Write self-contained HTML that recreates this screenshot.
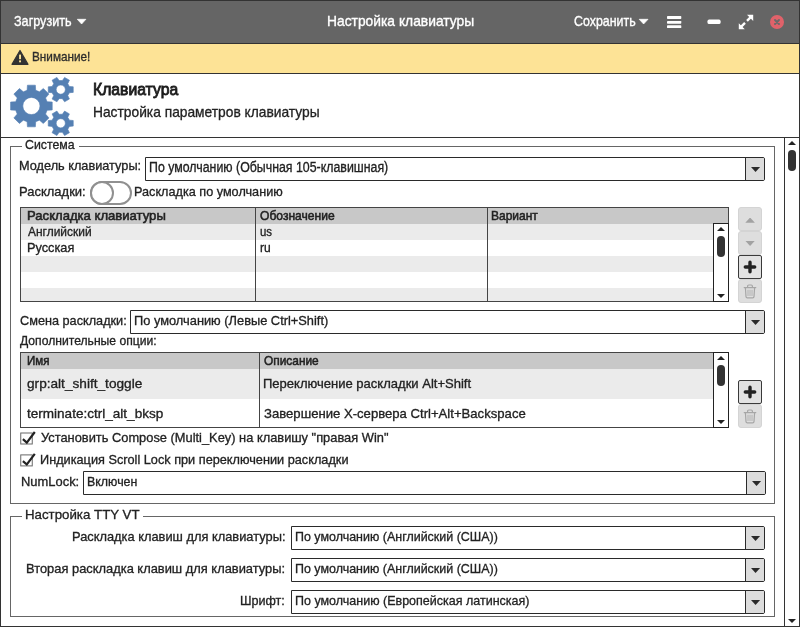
<!DOCTYPE html>
<html lang="ru">
<head>
<meta charset="utf-8">
<title>Настройка клавиатуры</title>
<style>
*{box-sizing:border-box;margin:0;padding:0}
html,body{width:800px;height:627px;overflow:hidden;background:#fff}
body{font-family:"Liberation Sans",sans-serif;font-size:13px;color:#222;position:relative}
.abs,.abs>*{position:absolute}
.t{position:absolute;white-space:nowrap;line-height:20px;height:20px;color:#222;transform-origin:0 50%;-webkit-text-stroke:.32px #222}
#win{left:0;top:0;width:800px;height:627px;position:absolute;overflow:hidden}
.ln{position:absolute;background:#333}
#title{left:0;top:0;width:800px;height:43px;background:#656565}
#warn{left:0;top:43px;width:800px;height:31px;background:#fde396;border-top:1px solid #333;border-bottom:1px solid #333}
#hdr{left:0;top:74px;width:800px;height:64px;background:#fff;border-bottom:1px solid #333}
.fs{position:absolute;border:1px solid #666}
.lg{position:absolute;background:#fff;height:14px}
.sel{position:absolute;height:24px;border:1px solid #2a2a2a;background:#fff;border-radius:0 2px 2px 0}
.sel .b{position:absolute;right:0;top:0;width:19px;height:22px;background:#dcdcdc;border-left:1px solid #2a2a2a;border-radius:0 1px 1px 0}
.sel .b:after{content:"";position:absolute;left:4.800px;top:8.800px;width:9.500px;height:5.200px;background:#2a2a2a;clip-path:polygon(0 0,100% 0,50% 100%)}
.tbl{position:absolute;border:1px solid #444;background:#fff;overflow:hidden}
.tbl .r{position:absolute;left:0;width:100%}
.tbl .v{position:absolute;top:0;bottom:0;width:1px;background:#444}
.sb{position:absolute;background:#fff;border:1px solid #222}
.thumb{position:absolute;background:#333;border-radius:4px;width:8px}
.up,.dn{position:absolute;width:0;height:0;border:4px solid transparent}
.up{border-bottom:4px solid #222;border-top:0}
.dn{border-top:4px solid #222;border-bottom:0}
.btn{position:absolute;width:24px;height:24px;border-radius:3px;background:#dedede;border:1px solid #d4d4d4}
.btn.en{border-color:#3a3a3a;background:#e2e2e2;border-radius:2px}
</style>
</head>
<body>
<div id="win">
<div id="title" class="abs">
</div>
<div id="warn" class="abs">
</div>
<div id="hdr" class="abs">
</div>

<!-- scroll area -->
<div class="ln" style="left:784px;top:138px;width:1px;height:488px"></div>
<div class="up" style="left:788px;top:141px"></div>
<div class="thumb" style="left:788px;top:150px;height:21px"></div>
<div class="dn" style="left:788px;top:619px"></div>

<!-- fieldset 1 -->
<div class="fs" style="left:10px;top:146px;width:765px;height:358px"></div>
<div class="lg" style="left:22px;top:139px;width:57px"></div>
<div class="sel" style="left:145px;top:157px;width:620px"><div class="b"></div></div>
<div id="tog" style="position:absolute;left:90px;top:181px;width:42px;height:24px;border:2px solid #909090;border-radius:12px;background:#fff"></div>
<div id="knob" style="position:absolute;left:90px;top:181px;width:24px;height:24px;border:2px solid #909090;border-radius:12px;background:#fff"></div>

<!-- table 1 -->
<div class="tbl" style="left:20px;top:207px;width:709px;height:95px">
  <div class="r" style="top:0;height:16px;background:#c8c8c8"></div>
  <div class="r" style="top:16px;height:16px;background:#ebebeb"></div>
  <div class="r" style="top:48px;height:16px;background:#ebebeb"></div>
  <div class="r" style="top:80px;height:16px;background:#ebebeb"></div>
  <div class="v" style="left:234px"></div>
  <div class="v" style="left:466px"></div>
</div>
<div class="sb" style="left:713px;top:223px;width:16px;height:79px">
  <div class="up" style="left:3px;top:3px"></div>
  <div class="thumb" style="left:3px;top:12px;height:21px"></div>
  <div class="dn" style="left:3px;top:70px"></div>
</div>
<div class="btn" style="left:738px;top:207px"><div style="position:absolute;left:6.300px;top:9.500px;width:9.600px;height:5.200px;background:#a2a2a2;clip-path:polygon(50% 0,100% 100%,0 100%)"></div></div>
<div class="btn" style="left:738px;top:231px"><div style="position:absolute;left:6.300px;top:8.700px;width:9.600px;height:5.200px;background:#a2a2a2;clip-path:polygon(0 0,100% 0,50% 100%)"></div></div>
<div class="btn en" style="left:738px;top:255px"><svg width="22" height="22" style="position:absolute;left:0;top:0"><path d="M11 6.300v9.400M6.300 11h9.400" stroke="#222" stroke-width="3.400" stroke-linecap="round"/></svg></div>
<div class="btn" style="left:738px;top:279px"><svg width="22" height="22" style="position:absolute;left:0;top:0" fill="none" stroke="#a6a6a6" stroke-width="1.200" stroke-linejoin="round" stroke-linecap="round"><path d="M5.200 7.600h11.600M8.600 7.400V6.200q0-1.200 1.200-1.200h2.400q1.200 0 1.200 1.200v1.200M6.400 7.800l.6 8.800q.1 1.200 1.300 1.200h5.400q1.200 0 1.300-1.200l.6-8.800"/><path d="M9 10.200v5.400M11 10.200v5.400M13 10.200v5.400" stroke-width=".8"/></svg></div>
<div class="sel" style="left:130px;top:310px;width:635px"><div class="b"></div></div>

<!-- table 2 -->
<div class="tbl" style="left:20px;top:352px;width:709px;height:76px">
  <div class="r" style="top:0;height:16px;background:#c8c8c8"></div>
  <div class="r" style="top:16px;height:30px;background:#ebebeb"></div>
  <div class="v" style="left:238px"></div>
</div>
<div class="sb" style="left:713px;top:352px;width:16px;height:76px">
  <div class="up" style="left:3px;top:3px"></div>
  <div class="thumb" style="left:3px;top:12px;height:21px"></div>
  <div class="dn" style="left:3px;top:67px"></div>
</div>
<div class="btn en" style="left:738px;top:380px"><svg width="22" height="22" style="position:absolute;left:0;top:0"><path d="M11 6.300v9.400M6.300 11h9.400" stroke="#222" stroke-width="3.400" stroke-linecap="round"/></svg></div>
<div class="btn" style="left:738px;top:404px"><svg width="22" height="22" style="position:absolute;left:0;top:0" fill="none" stroke="#a6a6a6" stroke-width="1.200" stroke-linejoin="round" stroke-linecap="round"><path d="M5.200 7.600h11.600M8.600 7.400V6.200q0-1.200 1.200-1.200h2.400q1.200 0 1.200 1.200v1.200M6.400 7.800l.6 8.800q.1 1.200 1.300 1.200h5.400q1.200 0 1.300-1.200l.6-8.800"/><path d="M9 10.200v5.400M11 10.200v5.400M13 10.200v5.400" stroke-width=".8"/></svg></div>

<svg style="position:absolute;left:0;top:425px" width="60" height="50"><rect x="20.750" y="8" width="11.500" height="11" fill="#fff" stroke="#686868" stroke-width="1"/><path d="M22.900 14.200L26.800 17.600L34.800 7" fill="none" stroke="#222" stroke-width="2.200"/><rect x="20.750" y="29.900" width="11.500" height="11" fill="#fff" stroke="#686868" stroke-width="1"/><path d="M22.900 36.100L26.800 39.500L34.800 28.900" fill="none" stroke="#222" stroke-width="2.200"/></svg>

<div class="sel" style="left:83px;top:471px;width:683px"><div class="b"></div></div>

<!-- fieldset 2 -->
<div class="fs" style="left:10px;top:516px;width:765px;height:101px"></div>
<div class="lg" style="left:22px;top:509px;width:121px"></div>
<div class="sel" style="left:291px;top:526px;width:474px"><div class="b"></div></div>
<div class="sel" style="left:291px;top:558px;width:474px"><div class="b"></div></div>
<div class="sel" style="left:291px;top:590px;width:474px"><div class="b"></div></div>


<svg id="ico" width="800" height="140" style="position:absolute;left:0;top:0" shape-rendering="geometricPrecision">
<path d="M77.300 19.300h8.600l-4.300 4.700z" fill="#fff" stroke="#fff" stroke-width=".7" stroke-linejoin="round"/>
<path d="M639.200 19.300h8.800l-4.400 4.700z" fill="#fff" stroke="#fff" stroke-width=".7" stroke-linejoin="round"/>
<rect x="667" y="16.100" width="14.300" height="2.900" rx=".7" fill="#fff"/>
<rect x="667" y="20.900" width="14.300" height="2.800" rx=".7" fill="#fff"/>
<rect x="667" y="25.300" width="14.300" height="2.800" rx=".7" fill="#fff"/>
<rect x="707.500" y="19.600" width="13.100" height="4.400" rx="1.600" fill="#fff"/>
<path d="M747 14.700h6.200v6.200zM738.800 23.200v6h6z" fill="#fff"/>
<path d="M751 16.900l-4 4M745 22.900l-4 4" stroke="#fff" stroke-width="2.300"/>
<circle cx="777" cy="22" r="7" fill="#e0626a"/>
<path d="M775 20l4 4M779 20l-4 4" stroke="#696969" stroke-width="1.900" stroke-linecap="round"/>
<path d="M20 50.500L28 64.300H12z" fill="#333" stroke="#333" stroke-width="1.200" stroke-linejoin="round"/>
<rect x="19.100" y="54.600" width="1.900" height="4.600" fill="#fde396"/>
<rect x="19.100" y="60.400" width="1.900" height="1.900" fill="#fde396"/>
<path d="M47.12 101.70L52.22 102.03L52.22 109.97L47.12 110.30L45.56 114.08L48.93 117.92L43.32 123.53L39.48 120.16L35.70 121.72L35.37 126.82L27.43 126.82L27.10 121.72L23.32 120.16L19.48 123.53L13.87 117.92L17.24 114.08L15.68 110.30L10.58 109.97L10.58 102.03L15.68 101.70L17.24 97.92L13.87 94.08L19.48 88.47L23.32 91.84L27.10 90.28L27.43 85.18L35.37 85.18L35.70 90.28L39.48 91.84L43.32 88.47L48.93 94.08L45.56 97.92ZM40.00 106.00A8.6 8.6 0 1 0 22.80 106.00A8.6 8.6 0 1 0 40.00 106.00Z" fill="#5580b3" fill-rule="evenodd" stroke="#5580b3" stroke-width=".6" stroke-linejoin="round"/>
<path d="M69.41 86.48L73.24 86.81L73.24 92.39L69.41 92.72L67.78 95.54L69.41 99.02L64.58 101.81L62.38 98.65L59.12 98.65L56.92 101.81L52.09 99.02L53.72 95.54L52.09 92.72L48.26 92.39L48.26 86.81L52.09 86.48L53.72 83.66L52.09 80.18L56.92 77.39L59.12 80.55L62.38 80.55L64.58 77.39L69.41 80.18L67.78 83.66ZM65.35 89.60A4.6 4.6 0 1 0 56.15 89.60A4.6 4.6 0 1 0 65.35 89.60Z" fill="#5580b3" fill-rule="evenodd" stroke="#5580b3" stroke-width=".6" stroke-linejoin="round"/>
<path d="M69.41 120.18L73.24 120.51L73.24 126.09L69.41 126.42L67.78 129.24L69.41 132.72L64.58 135.51L62.38 132.35L59.12 132.35L56.92 135.51L52.09 132.72L53.72 129.24L52.09 126.42L48.26 126.09L48.26 120.51L52.09 120.18L53.72 117.36L52.09 113.88L56.92 111.09L59.12 114.25L62.38 114.25L64.58 111.09L69.41 113.88L67.78 117.36ZM65.35 123.30A4.6 4.6 0 1 0 56.15 123.30A4.6 4.6 0 1 0 65.35 123.30Z" fill="#5580b3" fill-rule="evenodd" stroke="#5580b3" stroke-width=".6" stroke-linejoin="round"/>
</svg>
<div id="tx" style="position:absolute;left:0;top:0;width:800px;height:627px;will-change:transform">
<span class="t" style="top:11.05px;font-size:14.3px;left:13.90px;transform:scaleX(0.8822);color:#fff;-webkit-text-stroke:.35px #fff;">Загрузить</span>
<span class="t" style="top:11.05px;font-size:14.3px;left:326.70px;transform:scaleX(0.9668);color:#fff;-webkit-text-stroke:.35px #fff;">Настройка клавиатуры</span>
<span class="t" style="top:11.05px;font-size:14.3px;left:573.65px;transform:scaleX(0.8669);color:#fff;-webkit-text-stroke:.35px #fff;">Сохранить</span>
<span class="t" style="top:46.99px;font-size:13.6px;left:31.54px;transform:scaleX(0.8641);color:#333;">Внимание!</span>
<span class="t" style="top:79.14px;font-size:16.2px;left:93.19px;transform:scaleX(0.9711);color:#1c1c1c;-webkit-text-stroke:.85px #1c1c1c;">Клавиатура</span>
<span class="t" style="top:102.05px;font-size:15px;left:92.83px;transform:scaleX(0.9187);color:#222;">Настройка параметров клавиатуры</span>
<span class="t" style="top:135.04px;font-size:13.6px;left:25.25px;transform:scaleX(0.9060);">Система</span>
<span class="t" style="top:156.29px;font-size:13.6px;left:19.31px;transform:scaleX(0.9363);">Модель клавиатуры:</span>
<span class="t" style="top:158.02px;font-size:13.8px;left:148.85px;transform:scaleX(0.8958);">По умолчанию (Обычная 105-клавишная)</span>
<span class="t" style="top:181.99px;font-size:13.6px;left:19.29px;transform:scaleX(0.9554);">Раскладки:</span>
<span class="t" style="top:181.99px;font-size:13.6px;left:133.97px;transform:scaleX(0.9318);">Раскладка по умолчанию</span>
<span class="t" style="top:206.20px;font-size:13px;left:26.67px;transform:scaleX(1.0072);-webkit-text-stroke:.55px #222;">Раскладка клавиатуры</span>
<span class="t" style="top:206.20px;font-size:13px;left:259.96px;transform:scaleX(0.9291);-webkit-text-stroke:.55px #222;">Обозначение</span>
<span class="t" style="top:206.20px;font-size:13px;left:491.33px;transform:scaleX(0.9235);-webkit-text-stroke:.55px #222;">Вариант</span>
<span class="t" style="top:222.20px;font-size:13px;left:28.00px;transform:scaleX(0.9207);">Английский</span>
<span class="t" style="top:222.20px;font-size:13px;left:259.70px;transform:scaleX(0.8784);">us</span>
<span class="t" style="top:237.90px;font-size:13px;left:26.72px;transform:scaleX(0.9804);">Русская</span>
<span class="t" style="top:237.90px;font-size:13px;left:259.70px;transform:scaleX(0.9268);">ru</span>
<span class="t" style="top:311.29px;font-size:13.6px;left:20.25px;transform:scaleX(0.9335);">Смена раскладки:</span>
<span class="t" style="top:311.09px;font-size:13.6px;left:133.56px;transform:scaleX(0.9436);">По умолчанию (Левые Ctrl+Shift)</span>
<span class="t" style="top:331.43px;font-size:13.2px;left:20.25px;transform:scaleX(0.9201);">Дополнительные опции:</span>
<span class="t" style="top:351.10px;font-size:13px;left:27.06px;transform:scaleX(0.8860);-webkit-text-stroke:.55px #222;">Имя</span>
<span class="t" style="top:351.10px;font-size:13px;left:263.75px;transform:scaleX(0.9146);-webkit-text-stroke:.55px #222;">Описание</span>
<span class="t" style="top:374.00px;font-size:13px;left:27.00px;transform:scaleX(1.0491);">grp:alt_shift_toggle</span>
<span class="t" style="top:374.00px;font-size:13px;left:262.50px;transform:scaleX(1.0018);">Переключение раскладки Alt+Shift</span>
<span class="t" style="top:404.00px;font-size:13px;left:27.00px;transform:scaleX(1.0417);">terminate:ctrl_alt_bksp</span>
<span class="t" style="top:404.00px;font-size:13px;left:263.50px;transform:scaleX(1.0089);">Завершение X-сервера Ctrl+Alt+Backspace</span>
<span class="t" style="top:428.39px;font-size:13.6px;left:40.50px;transform:scaleX(0.9451);">Установить Compose (Multi_Key) на клавишу &quot;правая Win&quot;</span>
<span class="t" style="top:450.19px;font-size:13.6px;left:39.56px;transform:scaleX(0.9356);">Индикация Scroll Lock при переключении раскладки</span>
<span class="t" style="top:471.89px;font-size:13.6px;left:21.45px;transform:scaleX(0.9509);">NumLock:</span>
<span class="t" style="top:471.89px;font-size:13.6px;left:86.59px;transform:scaleX(0.9135);">Включен</span>
<span class="t" style="top:505.09px;font-size:13.6px;left:24.62px;transform:scaleX(0.9766);">Настройка TTY VT</span>
<span class="t" style="top:526.99px;font-size:13.6px;left:71.66px;transform:scaleX(0.9447);">Раскладка клавиш для клавиатуры:</span>
<span class="t" style="top:526.99px;font-size:13.6px;left:295.08px;transform:scaleX(0.9172);">По умолчанию (Английский (США))</span>
<span class="t" style="top:558.99px;font-size:13.6px;left:26.05px;transform:scaleX(0.9476);">Вторая раскладка клавиш для клавиатуры:</span>
<span class="t" style="top:558.99px;font-size:13.6px;left:295.08px;transform:scaleX(0.9172);">По умолчанию (Английский (США))</span>
<span class="t" style="top:590.99px;font-size:13.6px;left:240.28px;transform:scaleX(0.9246);">Шрифт:</span>
<span class="t" style="top:590.99px;font-size:13.6px;left:295.08px;transform:scaleX(0.9196);">По умолчанию (Европейская латинская)</span>
</div>
<div class="ln" style="left:0;top:0;width:800px;height:1px"></div>
<div class="ln" style="left:0;top:0;width:1px;height:627px"></div>
<div class="ln" style="left:799px;top:0;width:1px;height:627px"></div>
<div class="ln" style="left:0;top:626px;width:800px;height:1px"></div>
</div>
</body>
</html>
